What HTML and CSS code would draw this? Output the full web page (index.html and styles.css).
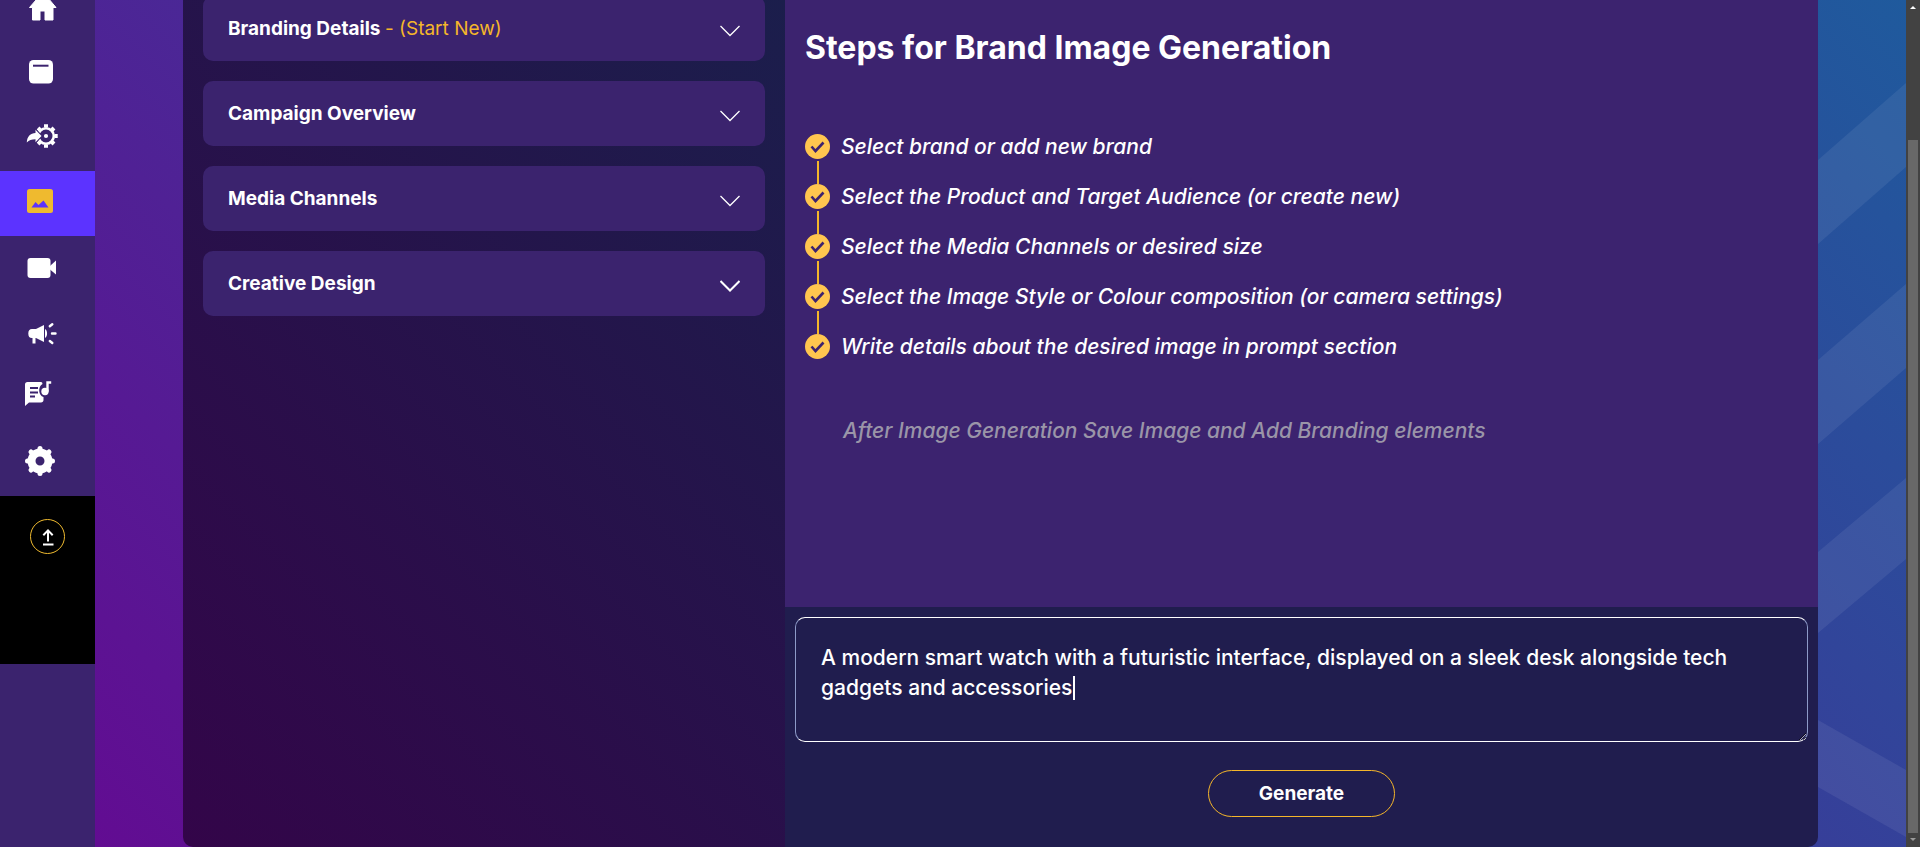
FILE: index.html
```html
<!DOCTYPE html>
<html lang="en">
<head>
<meta charset="utf-8">
<title>Brand Image Generation</title>
<link rel="stylesheet" href="styles.css">
</head>
<body>
<div class="app">
  <nav class="sidebar" aria-label="Main">
    <a class="nav-item" href="#home" aria-label="Home">
      <svg class="nav-icon" viewBox="0 0 40 45"><path d="M23 6 9.500 21.500h3V34h7.500V25h5v9h8V21.500h3z" fill="#fff" stroke="#fff" stroke-width="1" stroke-linejoin="round"/></svg>
    </a>
    <a class="nav-item" href="#library" aria-label="Library">
      <svg class="nav-icon" viewBox="0 0 40 45"><rect x="9" y="9" width="24" height="23.500" rx="4.500" fill="#fff"/><path d="M13 14.700h15.500" stroke="#3b236e" stroke-width="2"/></svg>
    </a>
    <a class="nav-item" href="#integrations" aria-label="Integrations">
      <svg class="nav-icon" viewBox="0 0 40 45"><circle cx="26" cy="20" r="7.800" fill="none" stroke="#fff" stroke-width="2.600"/><g stroke="#fff" stroke-width="4" stroke-linejoin="round"><path d="M26 11.500V8.300M26 28.500v3.200M34.500 20h3.200M32 14l2-2M32 26l2 2M20 14l-2-2M20 26l-2 2"/></g><circle cx="26" cy="20" r="2.100" fill="#fff"/><path d="M6.800 26.500C7 20.500 10.500 17.300 15.500 17v-3.200l6 6.200-6 6.200v-3c-4 0-6.500 1-8.700 3.300z" fill="#fff" stroke="#3b236e" stroke-width="2" paint-order="stroke"/></svg>
    </a>
    <a class="nav-item nav-item--active" href="#image" aria-label="Image" aria-current="page">
      <svg class="nav-icon" viewBox="0 0 40 45"><rect x="7" y="8" width="26" height="24" rx="2.500" fill="#efba2f"/><path d="M11.500 26.500 15.500 21l3 3 5-4.500 5 7z" fill="#5c33ff"/></svg>
    </a>
    <a class="nav-item" href="#video" aria-label="Video">
      <svg class="nav-icon" viewBox="0 0 40 45"><rect x="7.500" y="12" width="23" height="20" rx="3" fill="#fff"/><path d="m30 20 6-5.500v14L30 23.500z" fill="#fff"/></svg>
    </a>
    <a class="nav-item" href="#campaign" aria-label="Campaign">
      <svg class="nav-icon" viewBox="0 0 40 45"><path d="M12 18h4l8-4v17l-8-4h-.5v5.500h-3V27H12c-2.500 0-3.700-1.500-3.700-4.500S9.500 18 12 18zM25 18c2.800 1.500 2.800 7.500 0 9z" fill="#fff"/><path d="m29.800 15.200 2.500-2M32 22.500h3.500M29.800 30l2.500 2" stroke="#fff" stroke-width="2.400" stroke-linecap="round"/></svg>
    </a>
    <a class="nav-item" href="#audio" aria-label="Audio script">
      <svg class="nav-icon" viewBox="0 0 40 45"><path d="M7.500 6H21q1.500 0 1.500 2c-5 3-4 11.500 1 13v3c0 1.500-1 2.500-2.500 2.500H9L5 30V8.500Q5 6 7.500 6z" fill="#fff"/><path d="M10 12h8M10 16.500h8M10 20.500h5" stroke="#3b236e" stroke-width="2"/><circle cx="25" cy="15.500" r="3.700" fill="#fff"/><path d="M27.500 15.500V6.500h3.700" fill="none" stroke="#fff" stroke-width="2.400"/></svg>
    </a>
    <a class="nav-item" href="#settings" aria-label="Settings">
      <svg class="nav-icon" viewBox="0 0 40 45"><circle cx="20" cy="20" r="8.500" fill="none" stroke="#fff" stroke-width="8"/><path d="M20 9V7.500M20 31v1.500M9 20H7.500M31 20h1.500M12 12l-1-1M28 12l1-1M12 28l-1 1M28 28l1 1" stroke="#fff" stroke-width="5" stroke-linecap="round"/></svg>
    </a>
    <div class="upload">
      <button class="upload-button" type="button" aria-label="Upload">
        <svg class="upload-icon" viewBox="0 0 20 20"><path d="M10 14.500V4M5.300 8.200 10 3.400l4.700 4.800M5 17.500h10.500" fill="none" stroke="#fff" stroke-width="2"/></svg>
      </button>
    </div>
  </nav>

  <main class="workspace">
    <div class="panel">
      <section class="options">
        <button class="option" type="button"><span>Branding Details <span class="option-note">- (Start New)</span></span>
          <svg class="chevron" viewBox="0 0 20 12"><path d="m.5 1 9.500 9.500L19.500 1"/></svg></button>
        <button class="option" type="button"><span>Campaign Overview</span>
          <svg class="chevron" viewBox="0 0 20 12"><path d="m.5 1 9.500 9.500L19.500 1"/></svg></button>
        <button class="option" type="button"><span>Media Channels</span>
          <svg class="chevron" viewBox="0 0 20 12"><path d="m.5 1 9.500 9.500L19.500 1"/></svg></button>
        <button class="option" type="button"><span>Creative Design</span>
          <svg class="chevron chevron--bold" viewBox="0 0 20 12"><path d="m.5 1 9.500 9.500L19.500 1"/></svg></button>
      </section>

      <section class="stage">
        <div class="guide">
          <h1 class="guide-title">Steps for Brand Image Generation</h1>
          <ol class="steps">
            <li class="step"><svg class="step-icon" viewBox="0 0 25 25"><circle cx="12.500" cy="12.500" r="12.500"/><path d="m6.500 12.500 4 4.500 8-8.500"/></svg>Select brand or add new brand</li>
            <li class="step"><svg class="step-icon" viewBox="0 0 25 25"><circle cx="12.500" cy="12.500" r="12.500"/><path d="m6.500 12.500 4 4.500 8-8.500"/></svg>Select the Product and Target Audience (or create new)</li>
            <li class="step"><svg class="step-icon" viewBox="0 0 25 25"><circle cx="12.500" cy="12.500" r="12.500"/><path d="m6.500 12.500 4 4.500 8-8.500"/></svg>Select the Media Channels or desired size</li>
            <li class="step"><svg class="step-icon" viewBox="0 0 25 25"><circle cx="12.500" cy="12.500" r="12.500"/><path d="m6.500 12.500 4 4.500 8-8.500"/></svg>Select the Image Style or Colour composition (or camera settings)</li>
            <li class="step"><svg class="step-icon" viewBox="0 0 25 25"><circle cx="12.500" cy="12.500" r="12.500"/><path d="m6.500 12.500 4 4.500 8-8.500"/></svg>Write details about the desired image in prompt section</li>
          </ol>
          <p class="guide-note">After Image Generation Save Image and Add Branding elements</p>
        </div>
        <form class="prompt">
          <div class="prompt-box">
            <textarea class="prompt-input" aria-label="Prompt">A modern smart watch with a futuristic interface, displayed on a sleek desk alongside tech gadgets and accessories</textarea>
            <span class="caret"></span>
          </div>
          <button class="generate" type="button">Generate</button>
        </form>
      </section>
    </div>
    <svg class="stripes" viewBox="0 0 88 847" preserveAspectRatio="none" aria-hidden="true">
      <path d="M0 160 88 83v84L0 244zM0 360l88-76v84L0 444zM0 552l88-74v81L0 633zM0 720l88 50v67L0 787z" fill="#fff" fill-opacity=".07"/>
    </svg>
  </main>

  <div class="scrollbar" aria-hidden="true">
    <svg class="scroll-arrow" viewBox="0 0 14 14"><path d="M4 9h6L7 6z" fill="#fff"/></svg>
    <div class="scroll-thumb"></div>
    <svg class="scroll-arrow" viewBox="0 0 14 14"><path d="M4 5h6L7 8z" fill="#9a9a9a"/></svg>
  </div>
</div>
</body>
</html>
```
FILE: styles.css
```css
* { box-sizing: border-box; }

body {
  margin: 0;
  font-family: Inter, "Liberation Sans", sans-serif;
  color: #fff;
}

.app {
  display: flex;
  height: 100vh;
  overflow: hidden;
  background: #3b236e;
}

button, textarea { font-family: inherit; color: inherit; }

/* Sidebar */
.sidebar {
  flex: none;
  width: 95px;
  margin-top: -24px;
}

.nav-item {
  display: flex;
  height: 65px;
  padding: 10px 20px;
}

.nav-item--active { background: #5c33ff; }

.nav-icon { width: 40px; height: 45px; }

.upload {
  height: 168px;
  padding: 23px 30px;
  background: #000;
}

.upload-button {
  display: grid;
  place-items: center;
  width: 35px;
  height: 35px;
  padding: 0;
  border: 1px solid #efba2f;
  border-radius: 50%;
  background: none;
}

.upload-icon { width: 20px; height: 20px; }

/* Workspace */
.workspace {
  flex: 1;
  display: flex;
  min-width: 0;
  padding-left: 88px;
  background: linear-gradient(45deg, #620c92, #1f5a9d);
}

.panel {
  flex: 1;
  display: grid;
  grid-template-columns: 602px 1fr;
  min-width: 0;
  overflow: hidden;
  border-radius: 0 0 10px 10px;
}

.stripes { flex: none; width: 88px; height: 100%; }

/* Option cards */
.options {
  display: flex;
  flex-direction: column;
  gap: 20px;
  padding: 0 20px;
  background: linear-gradient(45deg, #330549, #1b1e4c);
}

.option {
  display: flex;
  align-items: center;
  justify-content: space-between;
  height: 65px;
  padding: 0 25px;
  border: 0;
  border-radius: 10px;
  background: #3b236e;
  font-size: 19px;
  font-weight: 700;
  text-align: left;
}

.option:first-child { margin-top: -4px; }

.option-note { color: #f5b62a; font-weight: 400; }

.chevron {
  width: 20px;
  height: 12px;
  margin-top: 5px;
  fill: none;
  stroke: #fff;
  stroke-width: 1.3;
}

.chevron--bold { stroke-width: 2; }

/* Guide */
.stage {
  display: flex;
  flex-direction: column;
  background: #201d4e;
}

.guide {
  flex: 1;
  padding: 28px 20px 0;
  background: #3c236f;
}

.guide-title {
  margin: 0;
  font-size: 32px;
  line-height: 40px;
  font-weight: 700;
}

.steps {
  display: grid;
  gap: 25px;
  margin: 66px 0 0;
  padding: 0;
  list-style: none;
}

.step {
  position: relative;
  display: flex;
  align-items: center;
  gap: 11px;
  height: 25px;
  font-size: 21px;
  line-height: 24px;
  font-weight: 500;
  font-style: italic;
}

.step:not(:last-child)::after {
  content: "";
  position: absolute;
  left: 12px;
  top: 27px;
  width: 2px;
  height: 23px;
  background: #f5b62a;
}

.step-icon { flex: none; width: 25px; height: 25px; }
.step-icon circle { fill: #ffc64f; }
.step-icon path { fill: none; stroke: #3c236f; stroke-width: 2.6; }

.guide-note {
  margin: 57px 0 0 38px;
  font-size: 21px;
  line-height: 30px;
  font-weight: 500;
  font-style: italic;
  color: #9a95a8;
}

/* Prompt */
.prompt {
  display: flex;
  flex-direction: column;
  align-items: center;
  gap: 28px;
  padding: 10px 10px 30px;
}

.prompt-box { position: relative; width: 100%; }

.prompt-input {
  display: block;
  width: 100%;
  height: 125px;
  padding: 25px;
  border: 1px solid;
  border-color: #fff #8d9ac8;
  border-radius: 10px;
  background: transparent;
  color-scheme: dark;
  font-size: 21px;
  line-height: 30px;
  font-weight: 500;
  resize: vertical;
}

.caret {
  position: absolute;
  left: 278px;
  top: 59px;
  width: 2px;
  height: 24px;
  background: #fff;
}

.generate {
  width: 187px;
  height: 47px;
  border: 1px solid #f5b62a;
  border-radius: 24px;
  background: none;
  font-size: 19px;
  font-weight: 700;
}

/* Scrollbar */
.scrollbar {
  flex: none;
  display: flex;
  flex-direction: column;
  width: 14px;
  background: #424242;
}

.scroll-arrow { flex: none; width: 14px; height: 14px; }

.scroll-thumb {
  flex: 1;
  margin: 126px 2px 0;
  background: #686868;
}
```
